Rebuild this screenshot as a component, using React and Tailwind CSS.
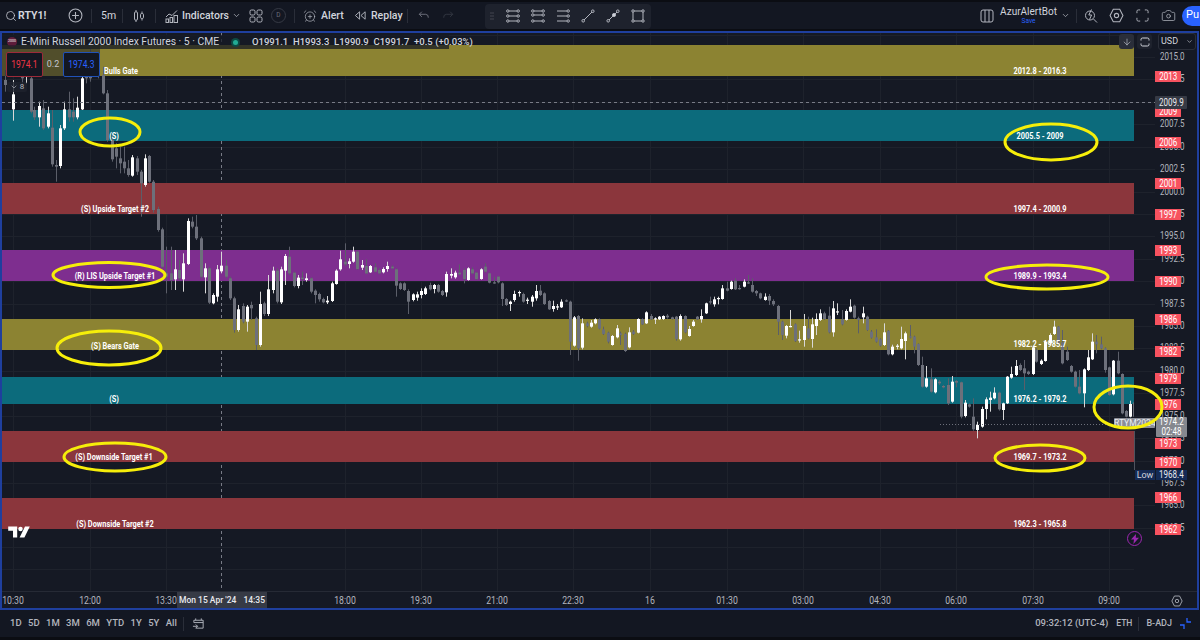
import React from "react";
import { AlarmClockPlus, Camera, ChevronDown, Search, ArrowDown } from "lucide-react";

const FONT = "font-['Roboto','Liberation_Sans',sans-serif]";

/* candles: [zoomX, bodyTop, bodyBottom, isWhite, wickTop, wickBottom] in 3x crop coordinates */
const G1 = [
  [15,60,75,0,30,95],[40,103,148,1,60,182],[65,30,55,0,10,80],[79,25,50,1,5,70],[92,55,155,0,30,160],[103,150,172,0,140,180],[117,138,172,1,125,200],[130,145,205,0,120,210],
  [143,160,200,1,140,205],[156,203,313,0,150,320],[168,315,320,0,300,365],[181,205,318,1,195,325],[193,148,205,1,125,210],[207,148,172,0,95,185],[220,155,172,0,115,185],[232,143,172,1,110,178],
  [245,55,148,1,20,150],[258,40,55,0,5,70],[270,45,55,0,-35,65],[295,30,45,0,10,55],[308,45,100,0,20,103],[322,100,240,0,90,245],[335,240,298,0,225,305],[348,265,290,0,250,325],
  [360,295,310,0,260,340],[372,305,325,0,260,340],[385,325,345,0,300,350],[397,292,347,1,285,350],[411,295,335,0,288,345],[423,335,370,0,330,470],[436,295,375,1,283,380],[448,288,365,0,285,368],
  [460,365,450,0,360,458],[473,447,510,0,440,515],[485,508,620,0,503,625],[499,640,650,0,560,700],[512,640,660,0,560,690],[525,628,658,1,570,690],[537,630,655,0,600,660],[549,610,658,1,580,695],
  [563,483,612,1,475,615],[575,485,500,0,470,505],[589,500,535,0,465,540],[602,535,650,0,530,655],[614,625,652,1,610,700],[627,625,728,0,620,732],[638,705,730,1,700,733],[652,628,710,1,615,725],
  [664,617,634,1,575,640],[678,617,650,0,600,655],[690,655,715,0,650,720],[703,715,810,0,710,818],[715,748,810,1,735,815],[729,738,785,0,730,790],[741,740,785,1,735,815],[754,735,745,0,725,780],
  [767,775,855,0,770,870],[779,732,855,1,695,860],[792,730,762,0,725,768],[804,688,762,1,645,768],[818,632,690,1,620,700],[831,632,725,0,625,730],
];
const G2 = [
  [3,118,217,1,110,222],[16,78,122,1,72,165],[28,80,130,0,50,135],[42,128,168,0,125,172],[54,143,168,1,135,175],[67,143,147,0,125,165],[79,145,150,1,130,155],[92,145,185,0,142,190],
  [104,182,195,0,178,220],[117,192,208,0,188,215],[130,207,217,0,203,220],[142,212,217,1,198,222],[156,160,213,1,155,216],[168,122,162,1,118,164],[180,88,118,1,62,122],[194,95,103,0,40,108],
  [206,94,102,1,85,115],[220,65,95,1,50,98],[232,65,117,0,62,120],[245,105,113,1,90,120],[258,108,130,0,88,132],[271,108,127,1,105,129],[284,112,125,0,100,127],[296,120,130,0,115,133],
  [309,117,127,1,112,130],[321,108,117,1,95,125],[335,110,115,0,106,118],[347,118,167,0,115,200],[360,160,177,0,157,180],[372,160,180,0,157,183],[384,183,215,0,178,252],[398,193,210,1,190,214],
  [410,193,203,1,185,212],[423,183,195,1,175,205],[436,175,192,1,170,195],[449,165,178,0,158,181],[462,165,177,1,162,190],[474,165,185,0,162,188],[487,183,195,0,180,198],[499,132,187,1,125,200],
  [512,132,137,1,115,145],[525,128,142,1,122,146],[538,128,133,0,103,136],[551,120,147,0,115,160],[563,115,150,1,112,152],[576,118,130,0,112,133],[589,128,147,0,125,150],[602,118,147,1,115,149],
  [615,110,125,0,100,128],[628,130,158,0,127,160],[641,157,159,0,140,161],[654,140,157,0,138,160],[666,160,207,0,157,228],[678,207,225,0,204,228],[691,215,222,1,212,243],[703,192,210,1,182,215],
  [717,186,189,1,182,200],[729,192,215,0,188,218],[742,209,212,1,203,222],[755,200,215,1,195,230],[767,183,205,1,165,212],[780,182,195,0,165,198],[793,190,222,0,187,225],[806,213,238,0,210,240],
  [818,228,237,1,212,245],[831,229,232,1,222,240],[844,215,232,1,208,234],[857,211,214,0,208,216],[870,215,335,0,212,375],[882,262,347,1,258,350],[895,258,355,0,255,392],[907,280,353,1,265,358],
  [920,280,288,0,275,292],[933,278,290,1,270,293],[945,268,280,1,265,283],[958,268,296,0,265,298],[970,298,312,0,290,315],[984,308,335,0,305,340],[996,318,345,1,315,347],[1010,295,322,1,285,325],
];
const G3 = [
  [0,190,195,0,185,225],[15,192,243,0,188,246],[27,187,232,1,172,235],[40,185,192,0,180,195],[53,147,188,1,145,190],[66,147,163,0,145,165],[79,127,160,1,124,162],[92,138,148,0,132,150],
  [104,145,148,1,142,162],[117,140,148,1,138,150],[130,138,147,1,136,150],[142,137,142,0,132,146],[155,142,147,0,140,149],[168,140,207,0,138,212],[180,138,208,1,133,212],[194,138,187,0,136,190],
  [206,177,198,1,168,200],[218,155,168,1,150,170],[231,140,148,0,138,150],[244,138,148,1,118,158],[257,100,130,1,98,132],[270,94,97,0,80,103],[283,88,103,1,80,110],[295,84,87,1,80,103],
  [307,55,87,1,45,89],[320,55,62,0,35,64],[333,35,57,1,32,59],[346,32,58,0,25,60],[358,54,57,0,45,59],[372,35,50,1,28,52],[384,37,40,0,15,42],[396,45,65,0,25,68],
  [409,63,70,0,60,78],[421,70,85,0,68,88],[435,80,90,1,70,92],[447,78,92,0,72,105],[460,93,103,0,88,108],[473,108,155,0,105,195],[486,155,195,0,152,210],[498,168,197,1,165,205],
  [511,168,171,1,120,172],[524,163,213,0,160,216],[537,208,211,1,182,218],[551,168,210,1,132,230],[563,175,205,0,140,208],[576,163,207,1,143,233],[589,147,168,1,130,195],[600,130,150,1,118,153],
  [613,130,147,0,125,150],[626,137,187,0,110,190],[639,115,187,1,93,200],[652,124,127,1,100,135],[665,148,163,0,120,166],[677,123,150,1,118,152],[689,110,125,1,88,127],[703,107,143,0,104,146],
  [715,145,150,0,140,190],[729,130,142,1,110,160],[741,140,180,0,137,183],[754,185,203,0,180,206],[767,202,215,0,178,218],[779,208,227,0,205,230],[792,187,225,1,160,228],[804,183,253,0,180,256],
  [817,230,253,1,224,256],[830,227,230,1,222,238],[844,207,235,1,170,238],[856,190,213,1,185,268],[869,199,202,0,165,205],[881,200,230,0,197,250],[893,222,285,0,220,288],[907,285,350,0,260,353],
  [919,325,350,1,288,353],[932,328,365,0,295,368],[945,328,367,1,325,370],[958,335,340,0,330,345],
];
const G4 = [
  [10,228,232,0,225,235],[23,225,280,0,205,285],[36,215,275,1,198,278],[49,213,218,0,210,232],[62,217,320,0,215,325],[74,278,318,1,270,322],
  [87,283,290,0,280,293],[100,320,358,0,265,362],[112,345,360,1,335,385],[126,297,350,1,290,353],[138,268,297,1,262,328],[151,263,270,1,245,305],[163,248,265,1,232,268],[176,248,298,0,245,302],
  [188,280,300,1,278,330],[201,200,280,1,198,282],[214,192,203,1,170,206],[227,168,195,1,150,198],[240,165,180,0,160,183],[252,175,190,0,150,240],[265,185,192,0,182,195],[278,112,192,1,110,195],
  [289,120,155,0,115,158],[303,152,162,1,148,165],[316,95,153,1,90,155],[329,75,100,1,70,103],[342,50,72,1,32,75],[354,50,100,0,48,103],[367,97,160,0,60,163],[380,125,150,0,110,153],
  [393,168,185,0,165,188],[405,185,230,0,182,233],[418,230,250,0,180,253],[431,178,250,1,175,292],[444,142,180,1,120,183],[457,95,148,1,70,150],[469,95,103,0,75,130],[482,103,115,0,80,118],
  [495,115,180,0,112,188],[508,172,255,0,170,258],[519,152,253,1,150,256],[533,152,190,0,125,193],[545,192,310,0,190,313],[558,303,320,0,300,322],[571,282,320,1,272,322],[583,277,320,0,275,322],
];

const scale = (list, ox, oy) =>
  list.map(([zx, t, b, w, wt, wb]) => ({
    x: Math.round(ox + zx / 3),
    t: oy + t / 3,
    b: oy + b / 3,
    w,
    wt: oy + wt / 3,
    wb: oy + wb / 3,
  }));
const CANDLES = [
  ...scale(G1, 0, 60),
  ...scale(G2, 280, 230),
  ...scale(G3, 620, 270),
  ...scale(G4, 940, 310),
];

const ZONES = [
  [45, 31, "bg-[#8c8332]"],
  [110, 31, "bg-[#0c6b7c]"],
  [183, 31, "bg-[#8b363c]"],
  [250, 31, "bg-[#7e2e8f]"],
  [319, 31, "bg-[#8c8332]"],
  [377, 27, "bg-[#0c6b7c]"],
  [431, 31, "bg-[#8b363c]"],
  [498, 31, "bg-[#8b363c]"],
];
const LABELS = [
  ["Bulls Gate", 121, 71], ["(S)", 114, 136], ["(S) Upside Target #2", 115, 209], ["(R) LIS Upside Target #1", 115, 276],
  ["(S) Bears Gate", 115, 346], ["(S)", 114, 399], ["(S) Downside Target #1", 114, 457], ["(S) Downside Target #2", 115, 524],
  ["2012.8 - 2016.3", 1040, 71], ["2005.5 - 2009", 1040, 136], ["1997.4 - 2000.9", 1040, 209], ["1989.9 - 1993.4", 1040, 276],
  ["1982.2 - 1985.7", 1040, 344], ["1976.2 - 1979.2", 1040, 399], ["1969.7 - 1973.2", 1040, 457], ["1962.3 - 1965.8", 1040, 524],
];
const ELLIPSES = [
  [110, 132, 30, 14], [1051, 142, 46, 18], [109, 275, 56, 12.5], [109, 348, 52, 17],
  [1047, 277, 61, 12], [115, 457, 51, 14], [1040, 458, 45, 13], [1128, 407, 34, 21],
];
const ALERTS = [
  [2013, 76], [2009, 111], [2006, 142], [2001, 183], [1997, 214], [1993, 250], [1990, 281], [1986, 319],
  [1982, 351], [1979, 378], [1976, 404], [1973, 443], [1970, 462], [1966, 497], [1962, 529],
];
const PRICES = ["2015.0","2012.5","2010.0","2007.5","2005.0","2002.5","2000.0","1997.5","1995.0","1992.5","1990.0","1987.5","1985.0","1982.5","1980.0","1977.5","1975.0","1972.5","1970.0","1967.5","1965.0","1962.5"];
const TIMES = [["10:30",13],["12:00",90],["13:30",166],["18:00",345],["19:30",421],["21:00",497],["22:30",573],["16",650],["01:30",727],["03:00",803],["04:30",880],["06:00",956],["07:30",1033],["09:00",1109]];
const RANGES = ["1D","5D","1M","3M","6M","YTD","1Y","5Y","All"];

const Divider = ({ className = "" }) => <div className={`w-px h-[14px] bg-[#2a2e39] shrink-0 ${className}`} />;

const Ic = ({ size = 14, children, className = "" }) => (
  <svg width={size} height={size} viewBox="0 0 14 14" fill="none" stroke="#b2b5be" strokeWidth="1" className={`shrink-0 ${className}`}>
    {children}
  </svg>
);

const DrawDots = ({ rows }) => (
  <Ic>
    {rows.map((y, i) => (
      <g key={i}>
        <path d={`M3 ${y}H11`} />
        <circle cx="1.8" cy={y} r="1.2" />
        <circle cx="12.2" cy={y} r="1.2" />
      </g>
    ))}
  </Ic>
);

function TopBar() {
  return (
    <div className="flex items-center h-[27px] mb-[2px] bg-[#131722] text-[#d1d4dc] text-[10.5px] overflow-hidden">
      <Search size={12} strokeWidth={1.5} className="ml-[5px] shrink-0 text-[#d1d4dc]" />
      <span className="ml-px font-bold text-[10.5px] w-[25px]">RTY1!</span>
      <Ic size={15} className="ml-[25px]"><circle cx="7" cy="7" r="6" /><path d="M7 3.8v6.4M3.8 7h6.4" /></Ic>
      <Divider className="ml-[8px]" />
      <span className="ml-[9px] w-[13px]">5m</span>
      <Divider className="ml-[8px]" />
      <Ic className="ml-[9px]"><path d="M4 1v2M4 11v2M10 2.5v2M10 9.5v2" /><rect x="2.5" y="3" width="3" height="8" rx=".8" /><rect x="8.5" y="4.5" width="3" height="5" rx="1.2" /></Ic>
      <Divider className="ml-[9px]" />
      <Ic className="ml-[9px]"><path d="M1 8l3-3 3 1.5L12 1.5" /><rect x="1" y="10" width="2.5" height="3.5" /><rect x="5" y="8.5" width="2.5" height="5" /><rect x="9" y="6.5" width="3.5" height="7" /></Ic>
      <span className="ml-[3px] w-[41px] font-medium">Indicators</span>
      <ChevronDown size={9} className="ml-[9px] shrink-0 text-[#b2b5be]" />
      <Ic size={14} className="ml-[8px]"><rect x="1" y="1" width="5" height="5" rx="1.4" /><rect x="8" y="1" width="5" height="5" rx="1.4" /><rect x="1" y="8" width="5" height="5" rx="1.4" /><rect x="8" y="8" width="5" height="5" rx="1.4" /></Ic>
      <div className="ml-[8px] w-[15px] h-[15px] rounded-full border border-[#363a45] text-[#6a6d78] text-[6.5px] flex items-center justify-center shrink-0">D</div>
      <Divider className="ml-[8px]" />
      <AlarmClockPlus size={14} strokeWidth={1.2} className="ml-[8px] shrink-0 text-[#b2b5be]" />
      <span className="ml-[4px] w-[20px] font-medium">Alert</span>
      <Ic size={13} className="ml-[13px]"><path d="M6 3L1.5 7 6 11zM12 3L7.5 7 12 11z" /></Ic>
      <span className="ml-[4px] w-[27px] font-medium">Replay</span>
      <Divider className="ml-[9px]" />
      <Ic size={12} className="ml-[10px]"><path d="M4.5 2L1.5 5l3 3M1.5 5H9a3.5 3.5 0 0 1 3 4" stroke="#787b86" /></Ic>
      <Ic size={12} className="ml-[12px]"><path d="M9.5 2l3 3-3 3M12.5 5H5a3.5 3.5 0 0 0-3 4" stroke="#363a45" /></Ic>

      <div className="ml-[31px] mt-px w-[166px] h-[25px] shrink-0 rounded bg-[#1e222d] flex items-center pl-[5px] gap-[11px]">
        <svg width="4" height="8" viewBox="0 0 4 8" className="shrink-0 mr-px" fill="#50535e"><circle cx="1" cy="1" r=".7" /><circle cx="3" cy="1" r=".7" /><circle cx="1" cy="4" r=".7" /><circle cx="3" cy="4" r=".7" /><circle cx="1" cy="7" r=".7" /><circle cx="3" cy="7" r=".7" /></svg>
        <DrawDots rows={[2, 7, 12]} />
        <DrawDots rows={[2, 6, 12]} />
        <Ic><path d="M1 2h10M1 7h10M1 12h10" /><circle cx="12.2" cy="2" r="1.2" /><circle cx="12.2" cy="7" r="1.2" /><circle cx="12.2" cy="12" r="1.2" /></Ic>
        <Ic><path d="M3 11L11 3" /><circle cx="2.2" cy="11.8" r="1.3" /><circle cx="11.8" cy="2.2" r="1.3" /></Ic>
        <Ic><path d="M3 11L11 3" /><circle cx="2.2" cy="11.8" r="1.3" /><circle cx="11.8" cy="2.2" r="1.3" /><circle cx="8" cy="6" r="1.6" fill="#d1d4dc" /></Ic>
        <Ic><rect x="2" y="2" width="10" height="10" /><circle cx="2" cy="2" r="1.2" fill="#1e222d" /><circle cx="12" cy="2" r="1.2" fill="#1e222d" /><circle cx="2" cy="12" r="1.2" fill="#1e222d" /><circle cx="12" cy="12" r="1.2" fill="#1e222d" /></Ic>
      </div>

      <div className="ml-auto flex items-center shrink-0">
        <Ic><rect x="1" y="1" width="12" height="12" rx="2" /><path d="M5 1v12M9 1v12" /></Ic>
        <div className="ml-[8px] w-[53px] flex flex-col items-center leading-none">
          <span className="text-[10px] leading-[11px] text-[#d1d4dc]">AzurAlertBot</span>
          <span className="text-[6.5px] leading-[8px] text-[#2962ff]">Save</span>
        </div>
        <ChevronDown size={9} className="ml-[6px] shrink-0 text-[#b2b5be]" />
        <Divider className="ml-[6px]" />
        <Ic className="ml-[7px]"><circle cx="6" cy="6.5" r="4.5" /><path d="M9.5 10L13 13.5M7.5 0.5L4.8 6h2.8L5.5 10.5" /></Ic>
        <Ic size={15} className="ml-[11px]"><path d="M4 1.2h6L13 7l-3 5.8H4L1 7z" /><circle cx="7" cy="7" r="2" /></Ic>
        <Ic size={13} className="ml-[12px]"><path d="M1 4.5V2.5A1.5 1.5 0 0 1 2.5 1h2M9.5 1h2A1.5 1.5 0 0 1 13 2.5v2M13 9.5v2a1.5 1.5 0 0 1-1.5 1.5h-2M4.5 13h-2A1.5 1.5 0 0 1 1 11.5v-2" /></Ic>
        <Camera size={15} strokeWidth={1.2} className="ml-[12px] shrink-0 text-[#b2b5be]" />
        <div className="ml-[6px] w-[18px] h-[20px] rounded-l-full bg-[#2962ff] text-white text-[11px] flex items-center pl-[4px] overflow-hidden">Pu</div>
      </div>
    </div>
  );
}

function ChartSvg() {
  return (
    <svg width="1200" height="640" className="absolute left-0 top-0">
      {PRICES.map((_, i) => (
        <path key={i} d={`M0 ${57.5 + Math.round(i * 22.42)}H1134`} stroke="#1e222c" />
      ))}
      {[35, 547, 569].map((y) => <path key={y} d={`M0 ${y + 0.5}H1134`} stroke="#1e222c" />)}
      {TIMES.map(([, x]) => (
        <path key={x} d={`M${x + 0.5} 33V591`} stroke="#1e222c" />
      ))}
      <path d="M221.5 33V591" stroke="#787b86" strokeDasharray="3 3" />
    </svg>
  );
}

function CandleSvg() {
  return (
    <svg width="1200" height="640" className="absolute left-0 top-0">
      {CANDLES.map((c, i) => {
        const color = c.w ? "#ffffff" : "#6d707b";
        return (
          <g key={i}>
            <rect x={c.x} y={c.wt} width="1" height={Math.max(c.wb - c.wt, 1)} fill={c.w ? "#d8d8d8" : "#5b5e69"} />
            <rect x={c.x - 1} y={c.t} width="3" height={Math.max(c.b - c.t, 1.2)} fill={color} />
          </g>
        );
      })}
    </svg>
  );
}

function Legend() {
  return (
    <>
      <div className="absolute left-[2px] top-[35px] w-[447px] h-[14px] bg-[#151924]/75 flex items-center text-[#d1d4dc]">
        <div className="ml-[5px] w-[10px] h-[10px] rounded-full bg-[#5e1c3a] text-[3.5px] text-white flex items-center justify-center shrink-0">2000</div>
        <span className="ml-[4px] w-[198px] text-[11.5px] whitespace-nowrap origin-left scale-x-[.9]">E-Mini Russell 2000 Index Futures · 5 · CME</span>
        <div className="ml-[12px] w-[9px] h-[9px] rounded-full bg-[#0d4a44] flex items-center justify-center shrink-0">
          <div className="w-[5px] h-[5px] rounded-full bg-[#22ab94]" />
        </div>
        <span className="ml-[12px] text-[9.5px] whitespace-nowrap font-medium">O1991.1 &nbsp;H1993.3 &nbsp;L1990.9 &nbsp;C1991.7 &nbsp;+0.5 (+0.03%)</span>
      </div>
      <div className="absolute left-[2px] top-[45px] w-[98px] h-[31px] bg-[#151924]/50" />
      <div className="absolute left-[6px] top-[52px] flex items-center">
        <div className="w-[37px] h-[25px] rounded-[2px] border border-[#9c2a39] bg-[#131722] text-[#f23645] text-[10px] flex items-center justify-center"><span className="scale-x-[.85]">1974.1</span></div>
        <span className="w-[20px] text-center text-[9px] text-[#c3c6ce]">0.2</span>
        <div className="w-[37px] h-[25px] rounded-[2px] border border-[#2152b8] bg-[#131722] text-[#2962ff] text-[10px] flex items-center justify-center"><span className="scale-x-[.85]">1974.3</span></div>
      </div>
      <div className="absolute left-[7px] top-[82px] w-[20px] h-[10px] rounded-[2px] bg-[#1e222d]/80 flex items-center justify-center gap-[2px] text-[#b2b5be] text-[8px]">
        <ChevronDown size={8} /> 8
      </div>
    </>
  );
}

function Pane() {
  return (
    <div className="relative flex-1 overflow-hidden">
      <div className="absolute left-[-2px] top-[-33px] w-[1200px] h-[640px]">
        <ChartSvg />
        {ZONES.map(([y, h, c]) => (
          <div key={y} className={`absolute left-0 w-[1134px] ${c}`} style={{ top: y, height: h }} />
        ))}
        <CandleSvg />
        <Legend />
        {LABELS.map(([t, x, y]) => (
          <span
            key={t + y}
            className="absolute -translate-x-1/2 -translate-y-1/2 whitespace-nowrap text-white text-[9px] font-bold scale-x-[.82]"
            style={{ left: x, top: y + 1 }}
          >
            {t}
          </span>
        ))}
        <svg width="22" height="12" viewBox="0 0 36 20" className="absolute left-[8px] top-[526px]">
          <path d="M0 1h15v18H8V8H0zM28 1h8l-9 18h-8z" fill="#ffffff" />
          <circle cx="20.5" cy="5" r="3.8" fill="#ffffff" />
        </svg>
      </div>
    </div>
  );
}

function PriceAxis() {
  return (
    <div className="relative w-[63px] shrink-0 overflow-hidden">
      <div className="absolute left-[-1134px] top-[-33px] w-[1200px] h-[640px]">
        {PRICES.map((p, i) => (
          <span key={p} className="absolute left-[1160px] -translate-y-1/2 origin-left scale-x-[.8] text-[10px] leading-none text-[#b2b5be]" style={{ top: 57 + i * 22.42 }}>
            {p}
          </span>
        ))}
      </div>
    </div>
  );
}

function Overlay() {
  return (
    <div className="absolute left-0 top-[-31px] w-[1200px] h-[640px] pointer-events-none">
      <svg width="1200" height="640" className="absolute left-0 top-0">
        {PRICES.map((_, i) => (
          <path key={i} d={`M1134 ${57.5 + Math.round(i * 22.42)}H1155`} stroke="#1e222c" />
        ))}
        <path d="M2 102.5H1155" stroke="#787b86" strokeDasharray="3 3" />
        <path d="M940 424.5H1114" stroke="#6d707b" strokeDasharray="1 2" />
        <path d="M1134.5 431V470" stroke="#50535e" />
      </svg>
      <div className="absolute left-[1119px] top-[34px] w-[15px] h-[15px] rounded-[3px] bg-[#2a2e39] flex items-center justify-center text-[#d1d4dc]">
        <ArrowDown size={10} strokeWidth={1.4} />
      </div>
      <div className="absolute left-[1137px] top-[34px] w-[15px] h-[15px] rounded-[3px] bg-[#1e222d] flex items-center justify-center">
        <svg width="10" height="10" viewBox="0 0 10 10" fill="none" stroke="#d1d4dc"><path d="M1 3.5V2.5A1.5 1.5 0 0 1 2.5 1h5A1.5 1.5 0 0 1 9 2.5v1M1 6.5v1A1.5 1.5 0 0 0 2.5 9h5A1.5 1.5 0 0 0 9 7.5v-1" /></svg>
      </div>
      <div className="absolute left-[1158px] top-[33px] w-[38px] h-[17px] rounded-[3px] border border-[#2a2e39] bg-[#131722] flex items-center pl-[2px] text-[#d1d4dc] text-[9px]">
        USD
        <ChevronDown size={7} className="ml-auto mr-[2px]" />
      </div>
      {ALERTS.map(([p, y]) => (
        <div key={p} className="absolute left-[1155px] w-[26px] h-[11px] bg-[#f7525f] text-white text-[10px] leading-[11px] flex justify-center" style={{ top: y - 5.5 }}>
          <span className="scale-x-[.8]">{p}</span>
        </div>
      ))}
      <div className="absolute left-[1155px] top-[96px] w-[32px] h-[13px] rounded-[1px] bg-[#363a45] text-[#e8e9ee] text-[10px] leading-[13px] flex justify-center"><span className="scale-x-[.8]">2009.9</span></div>
      <div className="absolute left-[1114px] top-[418px] w-[41px] h-[10px] rounded-[1px] bg-[#8b8e98] text-[#eceef2] text-[8.5px] leading-[10px] text-center whitespace-nowrap overflow-hidden">RTYM2024</div>
      <div className="absolute left-[1156px] top-[417px] w-[31px] h-[20px] rounded-[1px] bg-[#85888f] text-white text-[10px] leading-[10px] flex flex-col items-center">
        <span className="scale-x-[.8]">1974.2</span>
        <span className="scale-x-[.8]">02:48</span>
      </div>
      <div className="absolute left-[1135px] top-[470px] w-[20px] h-[10px] bg-[#152a55] text-[#d1d4dc] text-[9px] leading-[10px] text-center">Low</div>
      <div className="absolute left-[1156px] top-[470px] w-[31px] h-[10px] bg-[#152a55] text-[#e8e9ee] text-[10px] leading-[10px] flex justify-center"><span className="scale-x-[.8]">1968.4</span></div>
      <div className="absolute left-[1127px] top-[531px] w-[15px] h-[15px] rounded-full border border-[#9c27b0] flex items-center justify-center">
        <svg width="8" height="10" viewBox="0 0 8 10" fill="#9c27b0"><path d="M5 0L0 5.6h3L2.4 10 8 3.8H4.8z" /></svg>
      </div>
      <svg width="1200" height="640" className="absolute left-0 top-0">
        {ELLIPSES.map(([cx, cy, rx, ry]) => (
          <ellipse key={cx + "-" + cy} cx={cx} cy={cy} rx={rx} ry={ry} fill="none" stroke="#f6ee0a" strokeWidth="3" />
        ))}
      </svg>
    </div>
  );
}

function TimeAxis() {
  return (
    <div className="relative h-[17px] shrink-0 border-t border-[#262a35]">
      {TIMES.map(([t, x]) => (
        <span key={t} className="absolute top-[3px] -translate-x-1/2 scale-x-[.87] text-[10px] leading-[12px] text-[#b2b5be]" style={{ left: x - 2 }}>
          {t}
        </span>
      ))}
      <div className="absolute left-[175px] top-0 w-[90px] h-[16px] bg-[#363a45] text-[#e8e9ee] text-[8.5px] font-medium flex items-center justify-center gap-[7px] whitespace-nowrap">
        <span>Mon 15 Apr '24</span>
        <span>14:35</span>
      </div>
      <Ic size={12} className="absolute left-[1169px] top-[3px]">
        <path d="M4 1.2h6L13 7l-3 5.8H4L1 7z" /><circle cx="7" cy="7" r="2" />
      </Ic>
    </div>
  );
}

function BottomBar() {
  return (
    <div className="flex items-center h-[27px] bg-[#131722] text-[#b2b5be] text-[9.5px] font-medium">
      <div className="ml-[10px] flex items-center gap-[6.4px]">
        {RANGES.map((r) => (
          <span key={r} className="whitespace-nowrap">{r}</span>
        ))}
      </div>
      <Divider className="ml-[6px]" />
      <Ic size={13} className="ml-[8px]"><path d="M2 6V3.5h10V12H4M4 1.5v2M10 1.5v2M2 6h10M1 10h5M4 8l2 2-2 2" /></Ic>
      <div className="ml-auto flex items-center">
        <span className="text-[9.5px]">09:32:12 (UTC-4)</span>
        <span className="ml-[8px] text-[8.5px]">ETH</span>
        <Divider className="ml-[6px]" />
        <span className="ml-[7px] text-[9px]">B-ADJ</span>
        <svg width="11" height="11" viewBox="0 0 11 11" fill="none" stroke="#2962ff" strokeWidth="1.3" className="ml-[8px] mr-[9px] shrink-0">
          <path d="M0 7h4v4M7 0v4h4" />
        </svg>
      </div>
    </div>
  );
}

export default function App() {
  return (
    <div className={`w-[1200px] h-[640px] pt-[2px] bg-[#0b0d13] overflow-hidden flex flex-col ${FONT}`}>
      <TopBar />
      <div className="relative w-[1199px] h-[579px] shrink-0 border-2 border-[#1f3f9e] bg-[#151924] flex flex-col">
        <div className="flex-1 flex min-h-0">
          <Pane />
          <PriceAxis />
        </div>
        <TimeAxis />
        <div className="absolute inset-0 -m-[2px]">
          <Overlay />
        </div>
      </div>
      <BottomBar />
    </div>
  );
}
